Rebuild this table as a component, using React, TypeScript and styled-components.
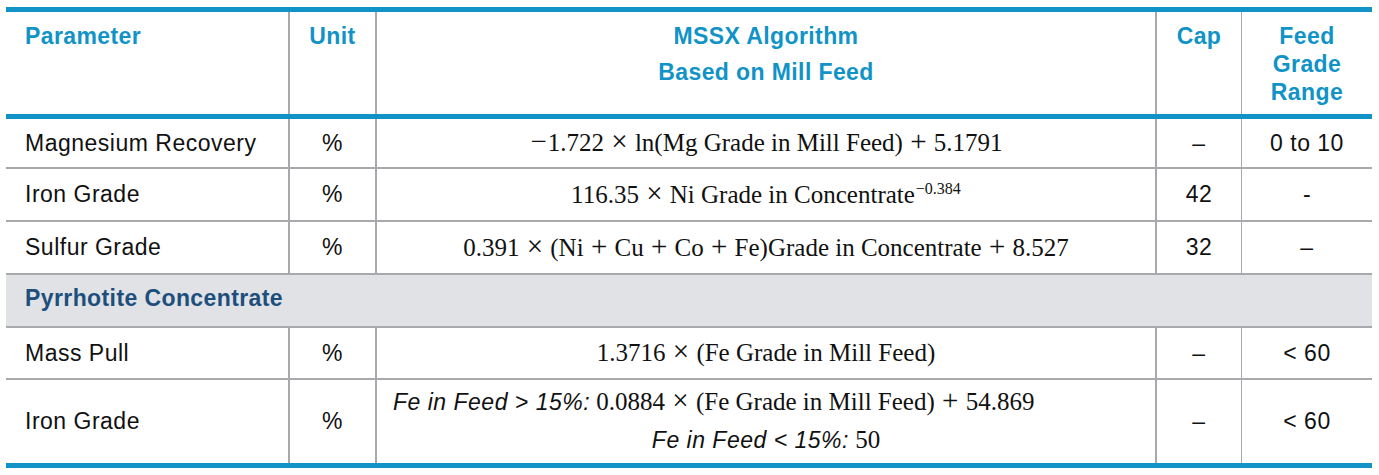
import React, { FC } from "react";
import styled, { createGlobalStyle } from "styled-components";

const GlobalStyle = createGlobalStyle`
  body {
    margin: 0;
    background: #ffffff;
    font-family: "Liberation Sans", Arial, sans-serif;
  }
`;

const BLUE = "#1193c8";
const GRAY = "#a7a9ac";
const COLS = "282px 87px 780px 86px 131px";

const Page = styled.div`
  padding: 7px 0 0 6px;
`;

const Table = styled.div`
  width: 1366px;
  border-top: 5px solid ${BLUE};
  border-bottom: 5px solid ${BLUE};
`;

const HeaderRow = styled.div`
  display: grid;
  grid-template-columns: ${COLS};
  height: 107px;
  box-sizing: border-box;
  border-bottom: 5px solid ${BLUE};
`;

const HeadCell = styled.div<{ $align?: "left" | "center"; $divider?: number }>`
  box-sizing: border-box;
  padding: 10px ${(p) => (p.$align === "left" ? "0 0 19px" : "0 0")};
  text-align: ${(p) => p.$align || "center"};
  border-left: ${(p) => (p.$divider ? `${p.$divider}px solid ${GRAY}` : "none")};
  color: ${BLUE};
  font-weight: bold;
  font-size: 23px;
  letter-spacing: 0.4px;
  line-height: 28px;
`;

const HeadLine = styled.div<{ $gap?: number }>`
  margin-top: ${(p) => p.$gap || 0}px;
`;

const Row = styled.div<{ $h: number; $last?: boolean }>`
  display: grid;
  grid-template-columns: ${COLS};
  height: ${(p) => p.$h}px;
  box-sizing: border-box;
  border-bottom: ${(p) => (p.$last ? "none" : `2px solid ${GRAY}`)};
`;

const Cell = styled.div<{ $align?: "left" | "center"; $divider?: number }>`
  display: flex;
  align-items: center;
  justify-content: ${(p) => (p.$align === "left" ? "flex-start" : "center")};
  box-sizing: border-box;
  padding-left: ${(p) => (p.$align === "left" ? "19px" : "0")};
  border-left: ${(p) => (p.$divider ? `${p.$divider}px solid ${GRAY}` : "none")};
  color: #111111;
  font-size: 23px;
  letter-spacing: 0.5px;
`;

const GroupRow = styled.div`
  height: 53px;
  box-sizing: border-box;
  display: flex;
  align-items: center;
  padding: 0 0 4px 19px;
  background: #e1e2e6;
  border-bottom: 2px solid ${GRAY};
  color: #1d4f7c;
  font-weight: bold;
  font-size: 23px;
  letter-spacing: 0.4px;
`;

const Formula = styled.span`
  font-family: "Liberation Serif", "Times New Roman", serif;
  font-size: 25px;
  letter-spacing: 0;
  white-space: nowrap;
  color: #111111;
`;

/* binary operators in the math font are drawn larger than the text */
const Op = styled.span`
  display: inline-block;
  margin: 0 1px;
  font-size: 29px;
  line-height: 0;
`;

const Sup = styled.sup`
  font-size: 16px;
  vertical-align: 9px;
  line-height: 0;
  margin-left: 1px;
`;

const StackCell = styled.div`
  display: flex;
  flex-direction: column;
  justify-content: center;
  box-sizing: border-box;
  border-left: 2px solid ${GRAY};
  padding-bottom: 2px;
  white-space: nowrap;
  color: #111111;
`;

const StackLine = styled.div<{ $centered?: boolean }>`
  align-self: ${(p) => (p.$centered ? "center" : "flex-start")};
  padding-left: ${(p) => (p.$centered ? "0" : "16px")};
  line-height: 38px;
  font-family: "Liberation Serif", "Times New Roman", serif;
  font-size: 25px;
`;

const Cond = styled.em`
  font-family: "Liberation Sans", Arial, sans-serif;
  font-style: italic;
  font-size: 23px;
  letter-spacing: 0.5px;
`;

type DataRow = {
  name: string;
  formula: React.ReactNode;
  cap: string;
  range: string;
  h: number;
};

const topRows: DataRow[] = [
  {
    name: "Magnesium Recovery",
    formula: (
      <>
        <Op>−</Op>1.722 <Op>×</Op> ln(Mg Grade in Mill Feed) <Op>+</Op> 5.1791
      </>
    ),
    cap: "–",
    range: "0 to 10",
    h: 50,
  },
  {
    name: "Iron Grade",
    formula: (
      <>
        116.35 <Op>×</Op> Ni Grade in Concentrate<Sup>−0.384</Sup>
      </>
    ),
    cap: "42",
    range: "-",
    h: 53,
  },
  {
    name: "Sulfur Grade",
    formula: (
      <>
        0.391 <Op>×</Op> (Ni <Op>+</Op> Cu <Op>+</Op> Co <Op>+</Op> Fe)Grade in
        Concentrate <Op>+</Op> 8.527
      </>
    ),
    cap: "32",
    range: "–",
    h: 53,
  },
];

const DataLine: FC<{ row: DataRow }> = ({ row }) => (
  <Row $h={row.h}>
    <Cell $align="left">{row.name}</Cell>
    <Cell $divider={2}>%</Cell>
    <Cell $divider={2}>
      <Formula>{row.formula}</Formula>
    </Cell>
    <Cell $divider={2}>{row.cap}</Cell>
    <Cell $divider={1}>{row.range}</Cell>
  </Row>
);

export const App: FC = () => {
  return (
    <Page>
      <GlobalStyle />
      <Table>
        <HeaderRow>
          <HeadCell $align="left">Parameter</HeadCell>
          <HeadCell $divider={2}>Unit</HeadCell>
          <HeadCell $divider={2}>
            <HeadLine>MSSX Algorithm</HeadLine>
            <HeadLine $gap={8}>Based on Mill Feed</HeadLine>
          </HeadCell>
          <HeadCell $divider={2}>Cap</HeadCell>
          <HeadCell $divider={1}>
            <HeadLine>Feed</HeadLine>
            <HeadLine>Grade</HeadLine>
            <HeadLine>Range</HeadLine>
          </HeadCell>
        </HeaderRow>

        {topRows.map((r) => (
          <DataLine key={r.name} row={r} />
        ))}

        <GroupRow>Pyrrhotite Concentrate</GroupRow>

        <DataLine
          row={{
            name: "Mass Pull",
            formula: (
              <>
                1.3716 <Op>×</Op> (Fe Grade in Mill Feed)
              </>
            ),
            cap: "–",
            range: "< 60",
            h: 52,
          }}
        />

        <Row $h={83} $last>
          <Cell $align="left">Iron Grade</Cell>
          <Cell $divider={2}>%</Cell>
          <StackCell>
            <StackLine>
              <Cond>Fe in Feed &gt; 15%:</Cond> 0.0884 <Op>×</Op> (Fe Grade in Mill
              Feed) <Op>+</Op> 54.869
            </StackLine>
            <StackLine $centered>
              <Cond>Fe in Feed &lt; 15%:</Cond> 50
            </StackLine>
          </StackCell>
          <Cell $divider={2}>–</Cell>
          <Cell $divider={1}>&lt; 60</Cell>
        </Row>
      </Table>
    </Page>
  );
};

export default App;
